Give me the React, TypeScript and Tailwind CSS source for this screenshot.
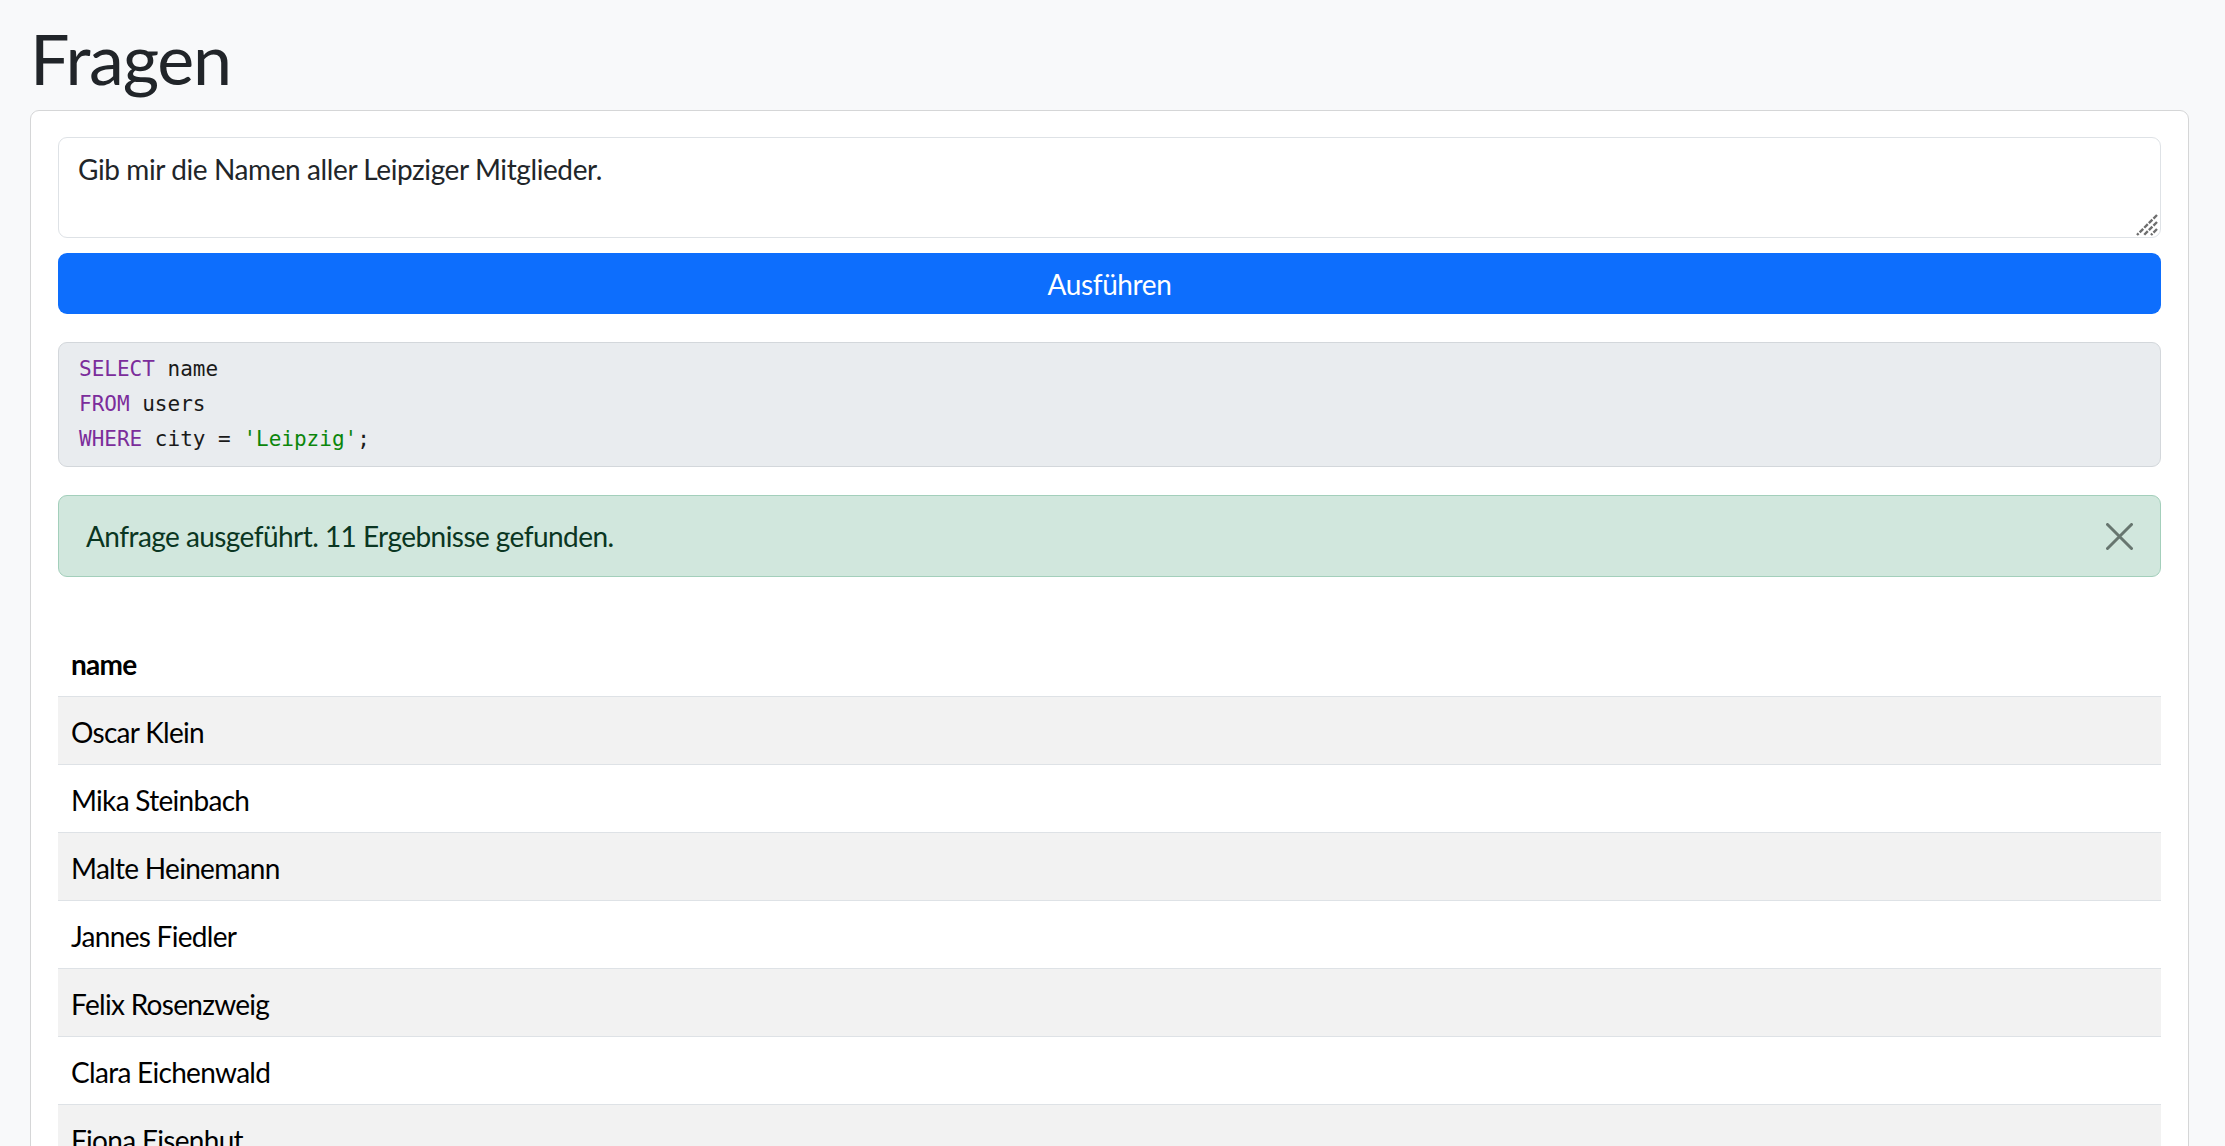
import React from "react";

const names = [
  "Oscar Klein",
  "Mika Steinbach",
  "Malte Heinemann",
  "Jannes Fiedler",
  "Felix Rosenzweig",
  "Clara Eichenwald",
  "Fiona Eisenhut",
  "Lena Hartmann",
  "Jonas Weber",
  "Paul Schubert",
  "Sophie Lindner",
];

export default function App() {
  return (
    <div
      className="min-h-screen bg-[#f8f9fa] pl-[30px] pr-[36px] pt-[16px] pb-[40px] text-[#212529] tracking-[-0.4px]"
      style={{ fontFamily: "Lato, 'Noto Sans', sans-serif" }}
    >
      <h1 className="m-0 mb-[10px] text-[70px] font-normal leading-[84px] tracking-[-1.2px] text-[#212529]">
        Fragen
      </h1>
      <div className="rounded-[9px] border border-[#d5d6d7] bg-white px-[27px] pt-[26px] pb-[27px]">
        <div className="relative">
          <textarea
            className="block h-[101px] w-full resize-none rounded-[9px] border border-[#dee2e6] bg-white px-[19px] py-[10px] text-[28px] leading-[42px] tracking-[-0.4px] text-[#212529] outline-none"
            style={{ fontFamily: "Lato, 'Noto Sans', sans-serif" }}
            defaultValue="Gib mir die Namen aller Leipziger Mitglieder."
          />
          <svg
            width="22"
            height="22"
            viewBox="0 0 22 22"
            className="pointer-events-none absolute right-[3px] bottom-[2px]"
          >
            <path
              d="M21 1 L1 21 M21 8 L8 21 M21 15 L15 21"
              stroke="#6e6e6e"
              strokeWidth="2.4"
              strokeDasharray="5 1.5"
            />
          </svg>
        </div>
        <button className="mt-[15px] flex h-[61px] w-full items-center justify-center rounded-[9px] bg-[#0d6efd] text-[28px] leading-[42px] tracking-[-0.4px] text-white">
          Ausführen
        </button>
        <pre
          className="m-0 mt-[28px] rounded-[9px] border border-[#d3d7db] bg-[#e9ecef] px-[20px] pt-[9px] pb-[9px] text-[21px] leading-[35px] tracking-normal text-[#1a1a1a]"
          style={{ fontFamily: "'DejaVu Sans Mono', 'Liberation Mono', monospace" }}
        >
          <div>
            <span className="text-[#7b2d9b]">SELECT</span> name
          </div>
          <div>
            <span className="text-[#7b2d9b]">FROM</span> users
          </div>
          <div>
            <span className="text-[#7b2d9b]">WHERE</span> city ={" "}
            <span className="text-[#0b860b]">'Leipzig'</span>;
          </div>
        </pre>
        <div className="mt-[28px] flex items-center justify-between rounded-[9px] border border-[#a3cfbb] bg-[#d1e7dd] py-[19px] pl-[27px] pr-[27px] text-[28px] leading-[42px] tracking-[-0.55px] text-[#0a3622]">
          <span>Anfrage ausgeführt. 11 Ergebnisse gefunden.</span>
          <svg width="27" height="27" viewBox="0 0 27 27" className="shrink-0">
            <path
              d="M1.5 1.5 L25.5 25.5 M25.5 1.5 L1.5 25.5"
              stroke="#67766f"
              strokeWidth="3"
              strokeLinecap="round"
            />
          </svg>
        </div>
        <table className="mt-[52px] w-full border-collapse text-[28px] tracking-[-0.7px] text-black">
          <thead>
            <tr className="border-b border-[#dee2e6]">
              <th className="px-[13px] pt-[16px] pb-[12px] text-left font-bold leading-[39px]">
                name
              </th>
            </tr>
          </thead>
          <tbody>
            {names.map((n, i) => (
              <tr
                key={n}
                className={`border-b border-[#dee2e6] ${i % 2 === 0 ? "bg-[#f2f2f2]" : "bg-white"}`}
              >
                <td className="px-[13px] pt-[16px] pb-[12px] leading-[39px]">{n}</td>
              </tr>
            ))}
          </tbody>
        </table>
      </div>
    </div>
  );
}
